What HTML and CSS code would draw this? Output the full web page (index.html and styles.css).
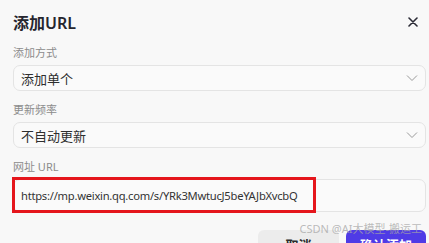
FILE: index.html
```html
<!DOCTYPE html>
<html lang="zh">

<head>
    <meta charset="UTF-8">
    <meta name="viewport" content="width=device-width, initial-scale=1.0">
    <title>添加URL</title>
    <link rel="stylesheet" href="styles.css">
</head>

<body>
    <div class="dialog">
        <div class="header">
            <h1>添加URL</h1>
            <span class="close">
                <svg width="10" height="10" viewBox="0 0 10 10">
                    <path d="M1 1L9 9M9 1L1 9" stroke="#2b2b36" stroke-width="1.6" stroke-linecap="round" />
                </svg>
            </span>
        </div>

        <div class="field first">
            <label>添加方式</label>
            <div class="select">
                <span>添加单个</span>
                <svg class="chevron" width="12" height="8" viewBox="0 0 12 8">
                    <path d="M1 1.5L6 6.5L11 1.5" fill="none" stroke="#9a9a9a" stroke-width="1" />
                </svg>
            </div>
        </div>

        <div class="field">
            <label>更新频率</label>
            <div class="select">
                <span>不自动更新</span>
                <svg class="chevron" width="12" height="8" viewBox="0 0 12 8">
                    <path d="M1 1.5L6 6.5L11 1.5" fill="none" stroke="#9a9a9a" stroke-width="1" />
                </svg>
            </div>
        </div>

        <div class="field">
            <label>网址 URL</label>
            <div class="input-wrap">
                <div class="input">https://mp.weixin.qq.com/s/YRk3MwtucJ5beYAJbXvcbQ</div>
                <div class="highlight"></div>
            </div>
        </div>

        <div class="footer">
            <span class="watermark">CSDN @AI大模型-搬运工</span>
            <button class="btn cancel">取消</button>
            <button class="btn confirm">确认添加</button>
        </div>
    </div>
</body>

</html>
```

FILE: styles.css
```css
* {
    margin: 0;
    padding: 0;
    box-sizing: border-box;
    font-family: "Noto Sans", "Noto Sans CJK SC", sans-serif;
}

body {
    background-color: #f8f8f8;
    width: 429px;
    height: 243px;
    overflow: hidden;
}

.dialog {
    padding: 11px 3px 0 13px;
}

.header {
    display: flex;
    justify-content: space-between;
    align-items: center;
    height: 22px;
    padding-right: 8px;
}

h1 {
    font-size: 16px;
    font-weight: 600;
    color: #26262e;
}

.close {
    display: flex;
}

.field {
    margin-top: 11px;
}

.field.first {
    margin-top: 12px;
}

label {
    display: block;
    font-size: 11px;
    color: #8c8c8c;
    line-height: 16px;
    margin-bottom: 4px;
}

.select {
    display: flex;
    justify-content: space-between;
    align-items: center;
    height: 26px;
    border: 1px solid #e4e4e4;
    border-radius: 7px;
    background-color: #fafafa;
    padding: 0 7px 0 7px;
    font-size: 13px;
    color: #2e2e2e;
}

.input-wrap {
    position: relative;
    margin-top: 2px;
}

.input {
    height: 33px;
    border: 1px solid #e4e4e4;
    border-radius: 7px;
    background-color: #fafafa;
    padding: 0 7px;
    display: flex;
    align-items: center;
    font-size: 11.2px;
    letter-spacing: -0.25px;
    color: #333;
}

.highlight {
    position: absolute;
    left: -1px;
    top: -2px;
    width: 304px;
    height: 36px;
    border: 3px solid #e5161c;
}

.footer {
    position: relative;
    display: flex;
    justify-content: flex-end;
    gap: 7px;
    margin-top: 18px;
}

.watermark {
    position: absolute;
    right: 4px;
    top: -10px;
    font-size: 11px;
    color: rgba(165, 165, 165, 0.75);
    z-index: 1;
}

.btn {
    border: none;
    border-radius: 6px;
    height: 28px;
    font-size: 13px;
    font-weight: 600;
}

.cancel {
    width: 81px;
    background-color: #ececec;
    color: #2b2b2b;
}

.confirm {
    width: 80px;
    background-color: #4f3be6;
    color: white;
}
```
